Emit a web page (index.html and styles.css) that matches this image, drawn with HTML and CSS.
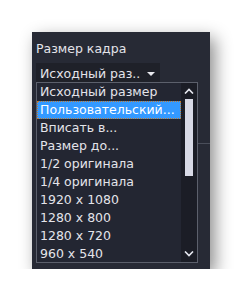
FILE: index.html
```html
<!DOCTYPE html>
<html lang="ru">
<head>
    <meta charset="UTF-8">
    <title>Размер кадра</title>
    <link rel="stylesheet" href="styles.css">
</head>
<body>
    <div class="panel">
        <div class="label">Размер кадра</div>
        <div class="combo">
            <span class="combo-text">Исходный раз..</span>
            <span class="combo-arrow"></span>
            <div class="list">
                <ul class="items">
                    <li>Исходный размер</li>
                    <li class="selected">Пользовательский...</li>
                    <li>Вписать в...</li>
                    <li>Размер до...</li>
                    <li>1/2 оригинала</li>
                    <li>1/4 оригинала</li>
                    <li>1920 x 1080</li>
                    <li>1280 x 800</li>
                    <li>1280 x 720</li>
                    <li>960 x 540</li>
                </ul>
                <div class="scrollbar">
                    <div class="scroll-btn">
                        <svg width="10" height="6" viewBox="0 0 10 6"><path d="M1 5.5 L5 1.5 L9 5.5" fill="none" stroke="#e6e8f0" stroke-width="1.6"/></svg>
                    </div>
                    <div class="track"><div class="thumb"></div></div>
                    <div class="scroll-btn">
                        <svg width="10" height="6" viewBox="0 0 10 6"><path d="M1 0.5 L5 4.5 L9 0.5" fill="none" stroke="#e6e8f0" stroke-width="1.6"/></svg>
                    </div>
                </div>
            </div>
        </div>
        <div class="side-line"></div>
    </div>
</body>
</html>
```

FILE: styles.css
```css
body {
    margin: 0;
    background-color: #ffffff;
    font-family: "DejaVu Sans", Verdana, sans-serif;
}
.panel {
    position: relative;
    margin: 32px 0 0 32px;
    width: 178px;
    height: 237px;
    background-color: #272a35;
    box-shadow: 5px 6px 16px rgba(0,0,0,0.45);
    color: #e4e4ea;
    font-size: 12.5px;
}
.label {
    padding: 9px 0 0 4px;
    height: 22px;
    line-height: 16px;
}
.combo {
    position: relative;
    margin-left: 4px;
    width: 124px;
    height: 20px;
    background-color: #1f2129;
    display: flex;
    align-items: center;
    justify-content: space-between;
    padding: 0 5px 0 4px;
    box-sizing: border-box;
}
.combo-text {
    line-height: 16px;
    padding-top: 2px;
}
.combo-arrow {
    width: 0;
    height: 0;
    border-left: 4px solid transparent;
    border-right: 4px solid transparent;
    border-top: 4px solid #e8e8ee;
    margin-top: 1px;
}
.list {
    position: absolute;
    top: 19px;
    left: 0;
    width: 162px;
    height: 181px;
    box-sizing: border-box;
    border: 1px solid #5c606c;
    background-color: #232632;
    display: flex;
}
.items {
    list-style: none;
    margin: 0;
    padding: 0;
    flex: 1;
    min-width: 0;
}
.items li {
    height: 18px;
    line-height: 18px;
    padding-left: 3px;
    white-space: nowrap;
    overflow: hidden;
}
.items li.selected {
    background-color: #3399ff;
    color: #ffffff;
    outline: 1px dotted #c07a30;
    outline-offset: -1px;
}
.scrollbar {
    width: 16px;
    background-color: #1b1d26;
    display: flex;
    flex-direction: column;
}
.scroll-btn {
    height: 16px;
    display: flex;
    align-items: center;
    justify-content: center;
}
.track {
    flex: 1;
    padding: 0 4px;
}
.thumb {
    height: 77px;
    background-color: #d8dae6;
}
.side-line {
    position: absolute;
    left: 166px;
    top: 111px;
    width: 12px;
    height: 1px;
    background-color: #4a4e5a;
}
```
